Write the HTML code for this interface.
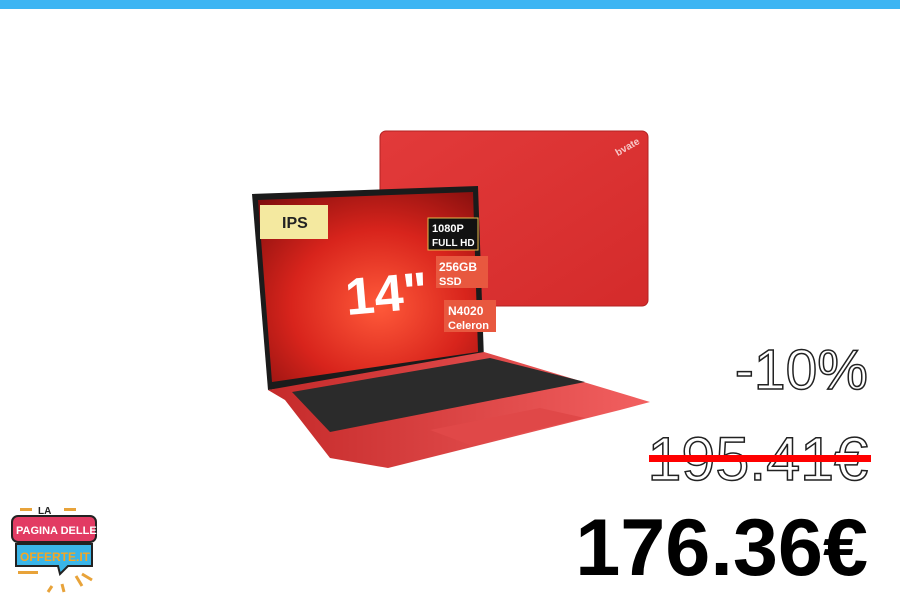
<!DOCTYPE html>
<html><head><meta charset="utf-8"><style>
body{margin:0;width:900px;height:600px;background:#fff;position:relative;overflow:hidden;font-family:"Liberation Sans",sans-serif}
.bar{position:absolute;left:0;top:0;width:900px;height:9px;background:#3db5f3}
.t{position:absolute;right:32px;font-family:"Liberation Sans",sans-serif;white-space:nowrap}
.o{color:#fff;-webkit-text-stroke:1.5px #222;font-weight:normal}
</style></head><body>
<div class="bar"></div>
<svg width="900" height="600" style="position:absolute;left:0;top:0">
<defs>
<linearGradient id="lid" x1="0" y1="0" x2="1" y2="1"><stop offset="0" stop-color="#e23a3a"/><stop offset="1" stop-color="#d42b2b"/></linearGradient>
<radialGradient id="scr" cx="0.55" cy="0.6" r="0.8"><stop offset="0" stop-color="#ff5a3a"/><stop offset="0.5" stop-color="#d8241c"/><stop offset="1" stop-color="#7a0c0c"/></radialGradient>
<linearGradient id="base" x1="0" y1="0" x2="1" y2="0"><stop offset="0" stop-color="#c52a2a"/><stop offset="1" stop-color="#f26060"/></linearGradient>
</defs>
<rect x="380" y="131" width="268" height="175" rx="6" fill="url(#lid)" stroke="#b32222"/>
<text x="615" y="150" fill="#f7c7c7" font-size="10" font-weight="bold" transform="rotate(-30 628 148)">bvate</text>
<polygon points="252,194 478,186 484,360 268,390" fill="#1b1b1b"/>
<polygon points="258,200 473,192 478,352 272,382" fill="url(#scr)"/>
<polygon points="268,390 484,352 650,402 620,410 388,468 330,458 285,400" fill="url(#base)"/>
<polygon points="292,392 490,358 585,382 330,432" fill="#2b2b2b"/>
<polygon points="430,430 540,408 585,418 470,445" fill="#e04848"/>
<rect x="260" y="205" width="68" height="34" fill="#f4e9a0"/>
<text x="282" y="228" font-size="16" font-weight="bold" fill="#222">IPS</text>
<rect x="428" y="218" width="50" height="32" fill="#111" stroke="#e7b84a"/>
<text x="432" y="232" font-size="11" font-weight="bold" fill="#fff">1080P</text>
<text x="432" y="246" font-size="10" font-weight="bold" fill="#fff">FULL HD</text>
<rect x="436" y="256" width="52" height="32" fill="#e8583f"/>
<text x="439" y="271" font-size="12" font-weight="bold" fill="#fff">256GB</text>
<text x="439" y="285" font-size="11" font-weight="bold" fill="#fff">SSD</text>
<rect x="444" y="300" width="52" height="32" fill="#e8583f"/>
<text x="448" y="315" font-size="12" font-weight="bold" fill="#fff">N4020</text>
<text x="448" y="329" font-size="11" font-weight="bold" fill="#fff">Celeron</text>
<text x="345" y="312" font-size="52" font-weight="bold" fill="#fff" transform="rotate(-5 380 290)">14"</text>
<rect x="20" y="508" width="12" height="3" fill="#e8a33a"/><rect x="64" y="508" width="12" height="3" fill="#e8a33a"/>
<text x="38" y="514" font-size="10" font-weight="bold" fill="#222">LA</text>
<rect x="12" y="516" width="84" height="26" rx="6" fill="#e23b63" stroke="#222" stroke-width="2"/>
<text x="16" y="534" font-size="11" font-weight="bold" fill="#fff">PAGINA DELLE</text>
<path d="M16 544 h76 v22 h-24 l-8 8 l-2 -8 h-42 z" fill="#3ab5e8" stroke="#222" stroke-width="2"/>
<text x="20" y="561" font-size="12" font-weight="bold" fill="#f5a623">OFFERTE.IT</text>
<rect x="18" y="571" width="20" height="3" fill="#e8a33a"/>
<path d="M76 576 l6 10 M82 574 l10 6 M62 584 l2 8 M52 586 l-4 6" stroke="#e8a33a" stroke-width="3"/>
</svg>
<div class="t o" style="top:339px;font-size:57px;line-height:62px">-10%</div>
<div class="t o" style="top:427px;font-size:61px;line-height:64px">195.41€</div>
<div style="position:absolute;left:649px;top:455px;width:222px;height:7px;background:#f00"></div>
<div class="t" style="top:503px;font-size:81px;line-height:90px;font-weight:bold;color:#000">176.36€</div>
</body></html>
